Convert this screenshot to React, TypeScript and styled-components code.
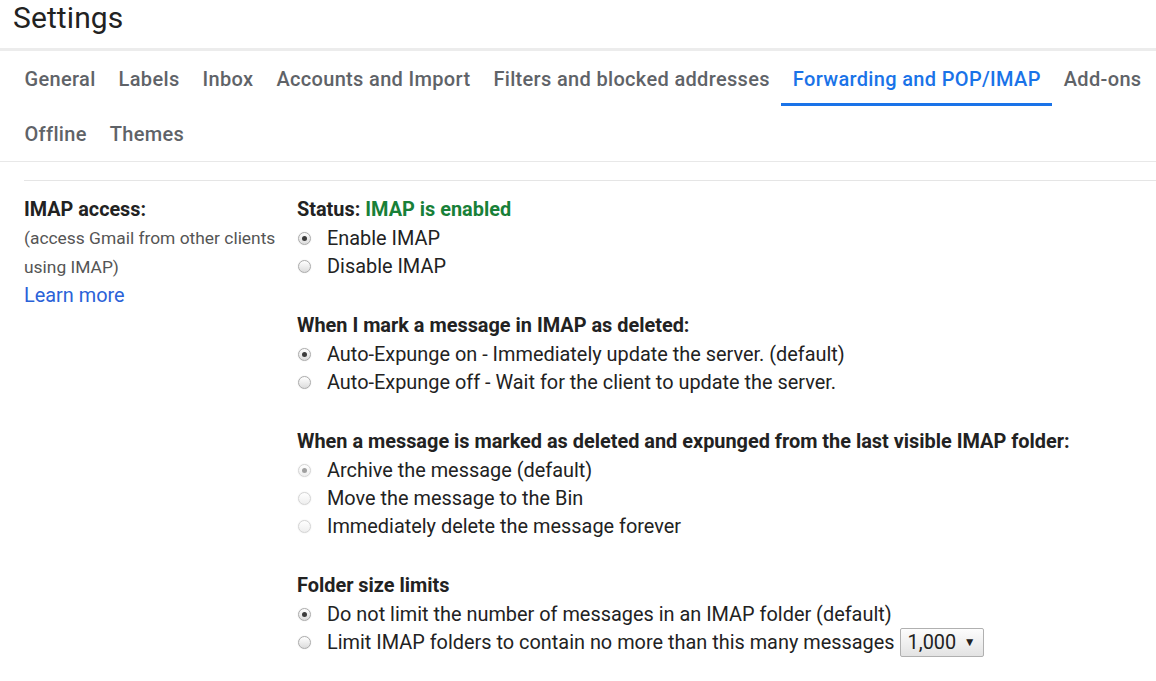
import styled, { createGlobalStyle, css } from 'styled-components';

const GlobalStyle = createGlobalStyle`
  body {
    margin: 0;
    background: #fff;
    font-family: Roboto, "Liberation Sans", Arial, sans-serif;
    color: #222;
  }
`;

const Page = styled.div`
  width: 1156px;
  min-height: 681px;
  overflow: hidden;
`;

const Header = styled.header`
  height: 48px;
  padding-left: 13px;
`;

const Title = styled.h1`
  margin: 0;
  font-size: 30px;
  line-height: 36px;
  font-weight: 400;
  color: #222;
  letter-spacing: 0.1px;
`;

const TabBar = styled.nav`
  width: 1175px;
  display: flex;
  flex-wrap: wrap;
  padding-left: 13px;
  border-top: 3px solid #ececec;
  border-bottom: 1px solid #e8e8e8;
`;

const Tab = styled.div<{ $active: boolean }>`
  height: 55px;
  padding: 0 11.5px;
  display: flex;
  align-items: center;
  font-size: 20px;
  font-weight: 500;
  letter-spacing: 0.33px;
  color: #5f6368;
  white-space: nowrap;
  ${(p) =>
    p.$active &&
    css`
      color: #1a73e8;
      box-shadow: inset 0 -3px 0 #1a73e8;
    `}
`;

const Content = styled.section`
  margin: 18px 0 0 24px;
  padding-top: 15px;
  border-top: 1px solid #e5e5e5;
  display: grid;
  grid-template-columns: 273px 1fr;
`;

const LabelColumn = styled.div`
  display: flex;
  flex-direction: column;
`;

const SectionLabel = styled.div`
  font-size: 19.8px;
  font-weight: 700;
  line-height: 28px;
  color: #222;
`;

const SectionHint = styled.div`
  font-size: 17.4px;
  line-height: 29px;
  color: #555;
  width: 260px;
`;

const LearnMore = styled.a`
  font-size: 19.9px;
  line-height: 28px;
  color: #2a62d8;
  text-decoration: none;
`;

const OptionsColumn = styled.div`
  display: flex;
  flex-direction: column;
  gap: 32px;
`;

const OptionGroup = styled.div`
  display: flex;
  flex-direction: column;
`;

const GroupTitle = styled.div`
  font-size: 19.9px;
  font-weight: 700;
  line-height: 28px;
  color: #222;
`;

const Enabled = styled.span`
  color: #188038;
`;

const Option = styled.div`
  display: flex;
  align-items: center;
  height: 28px;
  font-size: 19.9px;
  color: #222;
  white-space: nowrap;
`;

const Radio = styled.span<{ $checked: boolean; $disabled: boolean }>`
  position: relative;
  box-sizing: border-box;
  width: 13px;
  height: 13px;
  margin: 0 16px 0 1px;
  border-radius: 50%;
  border: 1px solid ${(p) => (p.$disabled ? '#d4d4d4' : '#ababab')};
  background: linear-gradient(#ffffff, ${(p) => (p.$disabled ? '#eeeeee' : '#dcdcdc')});
  box-shadow: 0 0 1.5px rgba(0, 0, 0, 0.12);
  flex-shrink: 0;
  ${(p) =>
    p.$checked &&
    css`
      &::after {
        content: '';
        position: absolute;
        left: 3px;
        top: 3px;
        width: 5px;
        height: 5px;
        border-radius: 50%;
        background: ${p.$disabled ? '#a0a0a0' : '#3c3c3c'};
      }
    `}
`;

const SelectBox = styled.span`
  box-sizing: border-box;
  display: inline-flex;
  align-items: center;
  justify-content: space-between;
  width: 84px;
  height: 29px;
  margin-left: 5px;
  padding: 0 7px 0 7px;
  border: 1px solid #b0b0b0;
  border-radius: 2px;
  background: linear-gradient(#fdfdfd, #e3e3e3);
  font-size: 19.9px;
  color: #222;
`;

const Arrow = styled.span`
  font-size: 12px;
  color: #222;
`;

const tabs = [
  'General',
  'Labels',
  'Inbox',
  'Accounts and Import',
  'Filters and blocked addresses',
  'Forwarding and POP/IMAP',
  'Add-ons',
  'Offline',
  'Themes',
];

type Choice = { label: string; checked?: boolean; disabled?: boolean };

type Group = { title: React.ReactNode; choices: Choice[]; limit?: boolean };

const App = () => {
  const groups: Group[] = [
    {
      title: (
        <>
          Status: <Enabled>IMAP is enabled</Enabled>
        </>
      ),
      choices: [{ label: 'Enable IMAP', checked: true }, { label: 'Disable IMAP' }],
    },
    {
      title: 'When I mark a message in IMAP as deleted:',
      choices: [
        { label: 'Auto-Expunge on - Immediately update the server. (default)', checked: true },
        { label: 'Auto-Expunge off - Wait for the client to update the server.' },
      ],
    },
    {
      title: 'When a message is marked as deleted and expunged from the last visible IMAP folder:',
      choices: [
        { label: 'Archive the message (default)', checked: true, disabled: true },
        { label: 'Move the message to the Bin', disabled: true },
        { label: 'Immediately delete the message forever', disabled: true },
      ],
    },
    {
      title: 'Folder size limits',
      choices: [
        { label: 'Do not limit the number of messages in an IMAP folder (default)', checked: true },
        { label: 'Limit IMAP folders to contain no more than this many messages' },
      ],
      limit: true,
    },
  ];

  return (
    <Page>
      <GlobalStyle />
      <Header>
        <Title>Settings</Title>
      </Header>
      <TabBar>
        {tabs.map((t) => (
          <Tab key={t} $active={t === 'Forwarding and POP/IMAP'}>
            {t}
          </Tab>
        ))}
      </TabBar>
      <Content>
        <LabelColumn>
          <SectionLabel>IMAP access:</SectionLabel>
          <SectionHint>(access Gmail from other clients using IMAP)</SectionHint>
          <LearnMore href="#">Learn more</LearnMore>
        </LabelColumn>
        <OptionsColumn>
          {groups.map((g, gi) => (
            <OptionGroup key={gi}>
              <GroupTitle>{g.title}</GroupTitle>
              {g.choices.map((c, ci) => (
                <Option key={c.label}>
                  <Radio $checked={!!c.checked} $disabled={!!c.disabled} />
                  {c.label}
                  {g.limit && ci === 1 && (
                    <SelectBox>
                      1,000
                      <Arrow>▼</Arrow>
                    </SelectBox>
                  )}
                </Option>
              ))}
            </OptionGroup>
          ))}
        </OptionsColumn>
      </Content>
    </Page>
  );
};

export default App;
